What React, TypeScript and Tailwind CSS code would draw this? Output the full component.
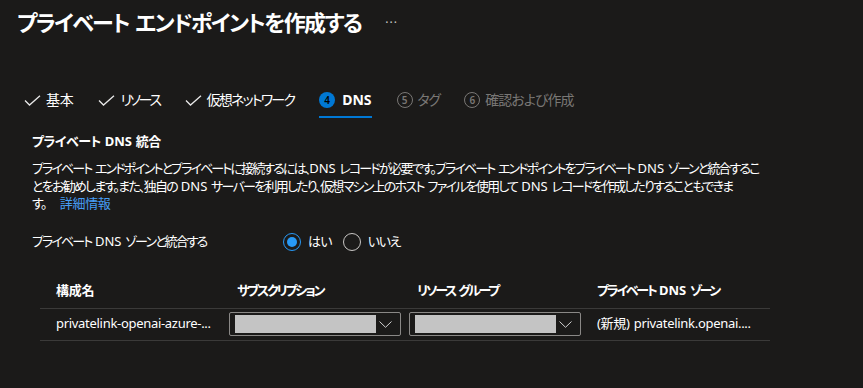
const font = "[font-family:'Noto_Sans','Noto_Sans_CJK_JP',sans-serif] [font-feature-settings:'palt']"

function L({ children }: { children: React.ReactNode }) {
  // latin runs keep normal spacing
  return <span className="tracking-normal">{children}</span>
}

function Check() {
  return (
    <svg width="17" height="11" viewBox="0 0 17 11" className="shrink-0">
      <path d="M1 5.5 L5.5 10 L16 0.8" fill="none" stroke="#e8e8e8" strokeWidth="1.3" />
    </svg>
  )
}

function Step({ n, active }: { n: number; active?: boolean }) {
  return active ? (
    <span className="flex h-[16px] w-[16px] shrink-0 items-center justify-center rounded-full bg-[#0078d4] text-[10px] font-semibold leading-none tracking-normal text-black">
      {n}
    </span>
  ) : (
    <span className="flex h-[16px] w-[16px] shrink-0 items-center justify-center rounded-full border border-[#797775] text-[10px] font-semibold leading-none tracking-normal text-[#797775]">
      {n}
    </span>
  )
}

function Dropdown() {
  return (
    <div className="flex h-[24px] w-[172px] items-center rounded-[2px] border border-[#8a8886] pl-[5px] pr-[8px]">
      <div className="h-[18px] w-[141px] bg-[#c4c4c4]" />
      <svg width="13" height="7" viewBox="0 0 13 7" className="ml-auto">
        <path d="M0.5 0.5 L6.5 6.3 L12.5 0.5" fill="none" stroke="#d0d0d0" strokeWidth="1" />
      </svg>
    </div>
  )
}

export default function App() {
  return (
    <div className={`h-[388px] w-[863px] overflow-hidden bg-[#1b1a19] text-white ${font}`}>
      <div className="flex h-[44px] items-center pl-[17px]">
        <h1 className="whitespace-nowrap text-[22px] font-semibold leading-[28px] tracking-[-1.6px] [word-spacing:2px]">
          プライベート エンドポイントを作成する
        </h1>
        <span className="ml-[24px] mt-[2px] text-[12px] tracking-[1px] text-[#c8c6c4]">···</span>
      </div>

      <div className="mt-[40px] flex h-[34px] items-stretch gap-[25px] pl-[24px] text-[14px] leading-[20px] tracking-[-1.6px]">
        <div className="flex items-center gap-[5px] border-b-2 border-transparent">
          <Check />
          <span className="tracking-[-0.3px]">基本</span>
        </div>
        <div className="flex items-center gap-[5px] border-b-2 border-transparent">
          <Check />
          <span className="tracking-[-2.4px]">リソース</span>
        </div>
        <div className="flex items-center gap-[5px] border-b-2 border-transparent">
          <Check />
          <span className="tracking-[-1.8px]">仮想ネットワーク</span>
        </div>
        <div className="flex items-center gap-[7px] border-b-2 border-[#0078d4]">
          <Step n={4} active />
          <span className="font-bold tracking-normal">DNS</span>
        </div>
        <div className="flex items-center gap-[5px] border-b-2 border-transparent text-[#797775]">
          <Step n={5} />
          <span>タグ</span>
        </div>
        <div className="flex items-center gap-[5px] border-b-2 border-transparent text-[#797775]">
          <Step n={6} />
          <span className="tracking-[-1px]">確認および作成</span>
        </div>
      </div>

      <div className="px-[32px]">
        <h2 className="mt-[14px] text-[13px] font-bold leading-[18px] tracking-[-0.5px] [word-spacing:1px]">
          プライベート <L>DNS</L> 統合
        </h2>
        <p className="mt-[10px] whitespace-nowrap text-[13px] leading-[17.5px] [word-spacing:2.2px]">
          <span className="tracking-[-1.9px]">
            プライベート エンドポイントとプライベートに接続するには、<L>DNS</L> レコードが必要です。プライベート エンドポイントをプライベート <L>DNS</L> ゾーンと統合するこ
          </span>
          <br />
          <span className="tracking-[-1.75px]">
            とをお勧めします。また、独自の <L>DNS</L> サーバーを利用したり、仮想マシン上のホスト ファイルを使用して <L>DNS</L> レコードを作成したりすることもできま
          </span>
          <br />
          <span className="tracking-[-1.6px]">す。</span>
          <a className="ml-[14px] tracking-[-0.3px] text-[#479ef5]">詳細情報</a>
        </p>

        <div className="mt-[17px] flex h-[24px] items-center text-[13px]">
          <span className="w-[251px] whitespace-nowrap tracking-[-1.9px] [word-spacing:2.2px]">
            プライベート <L>DNS</L> ゾーンと統合する
          </span>
          <label className="flex items-center gap-[7px]">
            <span className="flex h-[18px] w-[18px] items-center justify-center rounded-full border border-[#2899f5]">
              <span className="h-[10px] w-[10px] rounded-full bg-[#2899f5]" />
            </span>
            <span className="tracking-[-0.8px]">はい</span>
          </label>
          <label className="ml-[11px] flex items-center gap-[7px]">
            <span className="h-[18px] w-[18px] rounded-full border border-[#c8c6c4]" />
            <span className="tracking-[-1.3px]">いいえ</span>
          </label>
        </div>
      </div>

      <div className="ml-[40px] mt-[21px] w-[730px] text-[13px]">
        <div className="grid h-[34px] grid-cols-[181px_180px_180px_189px] items-center border-b border-[#3b3a39] font-bold [word-spacing:2.2px]">
          <span className="pl-[16px] tracking-[-0.3px]">構成名</span>
          <span className="pl-[16px] tracking-[-2.2px]">サブスクリプション</span>
          <span className="pl-[16px] tracking-[-2.3px]">リソース グループ</span>
          <span className="pl-[16px] tracking-[-2.2px]">
            プライベート <L>DNS</L> ゾーン
          </span>
        </div>
        <div className="grid h-[32px] grid-cols-[181px_180px_180px_189px] items-center border-b border-[#3b3a39]">
          <span className="pl-[16px] tracking-[-0.3px]">privatelink-openai-azure-...</span>
          <div className="pl-[8px]">
            <Dropdown />
          </div>
          <div className="pl-[8px]">
            <Dropdown />
          </div>
          <span className="whitespace-nowrap pl-[16px] tracking-[-0.3px] [word-spacing:1px]">(新規) privatelink.openai....</span>
        </div>
      </div>
    </div>
  )
}
